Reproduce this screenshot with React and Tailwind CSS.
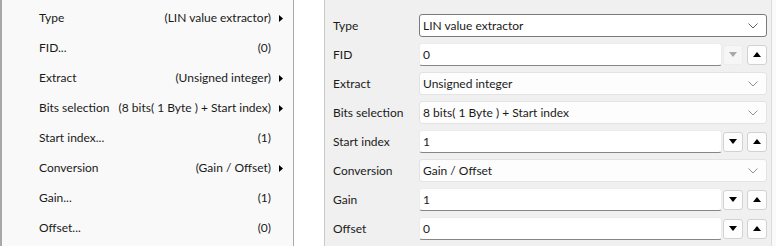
import React from 'react'

const menu = [
    { label: 'Type', value: '(LIN value extractor)', sub: true },
    { label: 'FID...', value: '(0)' },
    { label: 'Extract', value: '(Unsigned integer)', sub: true },
    { label: 'Bits selection', value: '(8 bits( 1 Byte ) + Start index)', sub: true },
    { label: 'Start index...', value: '(1)' },
    { label: 'Conversion', value: '(Gain / Offset)', sub: true },
    { label: 'Gain...', value: '(1)' },
    { label: 'Offset...', value: '(0)' },
]

const fields = [
    { label: 'Type', kind: 'combo', value: 'LIN value extractor', active: true },
    { label: 'FID', kind: 'spin', value: '0', downDisabled: true },
    { label: 'Extract', kind: 'combo', value: 'Unsigned integer' },
    { label: 'Bits selection', kind: 'combo', value: '8 bits( 1 Byte ) + Start index' },
    { label: 'Start index', kind: 'spin', value: '1' },
    { label: 'Conversion', kind: 'combo', value: 'Gain / Offset' },
    { label: 'Gain', kind: 'spin', value: '1' },
    { label: 'Offset', kind: 'spin', value: '0' },
]

function Chevron({ dark }) {
    return (
        <svg width="10" height="6" viewBox="0 0 10 6" className="shrink-0">
            <path d="M0.5 0.5 L5 5 L9.5 0.5" fill="none" stroke={dark ? '#606060' : '#8f8f8f'} strokeWidth="1" />
        </svg>
    )
}

function SpinButton({ up, disabled }) {
    return (
        <div className={`w-[20px] h-[20px] rounded-[3px] border flex items-center justify-center ${disabled ? 'bg-[#f6f6f6] border-[#ececec]' : 'bg-[#fdfdfd] border-[#d2d2d2]'}`}>
            <svg width="8" height="5" viewBox="0 0 8 5">
                <path d={up ? 'M0 5 L4 0 L8 5 Z' : 'M0 0 L8 0 L4 5 Z'} fill={disabled ? '#a8a8a8' : '#000'} />
            </svg>
        </div>
    )
}

function Field({ f }) {
    if (f.kind === 'combo') {
        return (
            <div className={`w-[348px] h-[23px] rounded-[3px] border flex items-center justify-between pl-[3px] pr-[8px] ${f.active ? 'bg-white border-[#7a7a7a]' : 'bg-[#fdfdfd] border-[#e3e3e3]'}`}>
                <span>{f.value}</span>
                <Chevron dark={f.active} />
            </div>
        )
    }
    return (
        <div className="flex items-center w-[348px]">
            <div className="w-[304px] h-[23px] bg-white rounded-[3px] border border-[#ececec] border-b-[#868686] flex items-center pl-[3px]">
                {f.value}
            </div>
            <div className="ml-[1px]"><SpinButton disabled={f.downDisabled} /></div>
            <div className="ml-[4px]"><SpinButton up /></div>
        </div>
    )
}

export default function App() {
    return (
        <div className="w-[776px] h-[246px] flex bg-[#fafafa] text-[12px] text-[#1a1a1a] overflow-hidden" style={{ fontFamily: 'Lato, "Liberation Sans", sans-serif' }}>
            <div className="w-[294px] h-full bg-[#f9f9f9] border-l-2 border-[#a8a8a8] border-r border-r-[#a9a9a9] pt-[3px]">
                {menu.map(m => (
                    <div key={m.label} className="h-[30px] flex items-center pl-[37px] pr-[10px]">
                        <span className="flex-1">{m.label}</span>
                        <span>{m.value}</span>
                        <span className="w-[12px] flex justify-end">
                            {m.sub && (
                                <svg width="4" height="7" viewBox="0 0 4 7"><path d="M0 0 L4 3.5 L0 7 Z" fill="#000" /></svg>
                            )}
                        </span>
                    </div>
                ))}
            </div>
            <div className="w-[31px] h-full bg-white border-r border-[#c9c9c9]" />
            <div className="w-[447px] h-full bg-[#f0f0f0] border-r border-[#dcdcdc] pl-[8px] pt-[14px] flex flex-col gap-[6px]">
                {fields.map(f => (
                    <div key={f.label} className="flex items-center h-[23px]">
                        <span className="w-[86px]">{f.label}</span>
                        <Field f={f} />
                    </div>
                ))}
            </div>
        </div>
    )
}
